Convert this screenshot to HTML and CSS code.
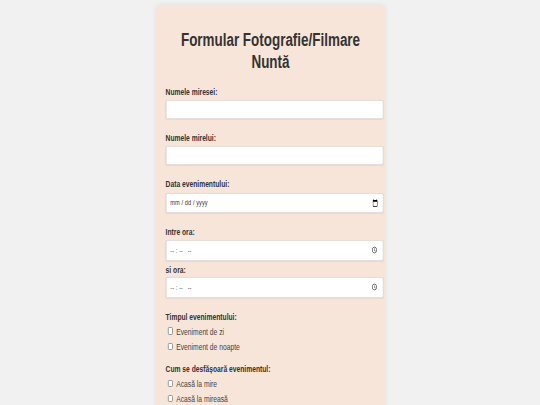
FILE: index.html
```html
<!DOCTYPE html>
<html lang="ro">
<head>
<meta charset="utf-8">
<title>Formular Fotografie/Filmare Nuntă</title>
<link rel="stylesheet" href="styles.css">
</head>
<body>
<div class="card">
  <h1 class="title">Formular Fotografie/Filmare Nuntă</h1>
  <form class="form">
    <div class="field">
      <label class="label" for="mireasa">Numele miresei:</label>
      <input class="input" type="text" id="mireasa">
    </div>
    <div class="field">
      <label class="label" for="mire">Numele mirelui:</label>
      <input class="input" type="text" id="mire">
    </div>
    <div class="field">
      <label class="label" for="data">Data evenimentului:</label>
      <input class="input input-date" type="date" id="data">
    </div>
    <div class="field">
      <label class="label" for="ora1">Intre ora:</label>
      <input class="input input-time" type="time" id="ora1">
      <label class="label label-sub" for="ora2">si ora:</label>
      <input class="input input-time" type="time" id="ora2">
    </div>
    <div class="field field-checks">
      <span class="label">Timpul evenimentului:</span>
      <div class="checks">
        <label class="check"><input class="box" type="checkbox"><span>Eveniment de zi</span></label>
        <label class="check"><input class="box" type="checkbox"><span>Eveniment de noapte</span></label>
      </div>
    </div>
    <div class="field field-checks">
      <span class="label">Cum se desfășoară evenimentul:</span>
      <div class="checks">
        <label class="check"><input class="box" type="checkbox"><span>Acasă la mire</span></label>
        <label class="check"><input class="box" type="checkbox"><span>Acasă la mireasă</span></label>
      </div>
    </div>
  </form>
</div>
</body>
</html>
```
FILE: styles.css
```css
html {
  scrollbar-width: none;
}
html::-webkit-scrollbar {
  display: none;
}
body {
  margin: 0;
  padding: 4.8px 0 0;
  background: #f1f1f1;
  font-family: "Liberation Sans", Arial, sans-serif;
  color: #333;
}
.card {
  width: 299.8px;
  padding: 12px 13.6px 20px;
  margin: 0 auto;
  background: #f8e5d9;
  border-radius: 5px;
  box-shadow: 0 0 6px rgba(0, 0, 0, 0.08);
  transform: scaleX(0.7);
}
.title {
  margin: 12.2px 0 12.6px;
  font-size: 19.2px;
  line-height: 22px;
  font-weight: bold;
  text-align: center;
  color: #333;
}
.form {
  margin: 0;
}
.field {
  margin-bottom: 13px;
}
.label {
  display: block;
  margin-bottom: 3.6px;
  font-size: 9.6px;
  line-height: 11px;
  font-weight: bold;
  color: #333;
}
.label-sub {
  margin-top: 3px;
  margin-bottom: 1.8px;
}
.input {
  display: block;
  width: 100%;
  height: 16.6px;
  padding: 0 4.8px;
  margin: 0;
  border: 1px solid #e2dcd8;
  border-radius: 2.4px;
  background: #fff;
  box-shadow: 0 0.5px 1px rgba(0, 0, 0, 0.06);
  font-family: "Liberation Sans", Arial, sans-serif;
  font-size: 8px;
  color: #333;
}
.input-date {
  height: 18px;
}
.input-time {
  height: 19px;
  color: #555;
}
.input::-webkit-datetime-edit-text {
  padding: 0 1.6px;
}
.field-checks {
  margin-bottom: 11.5px;
}
.checks {
  display: flex;
  flex-direction: column;
  gap: 4.3px;
}
.check {
  display: flex;
  align-items: center;
  height: 11px;
  font-size: 9.6px;
  line-height: 11px;
  color: #444;
}
.box {
  appearance: none;
  -webkit-appearance: none;
  box-sizing: border-box;
  width: 7.4px;
  height: 7.4px;
  margin: 0 4.6px 0 3.3px;
  border: 1px solid #8a8a8a;
  border-radius: 1.6px;
  background: #fff;
}
```
